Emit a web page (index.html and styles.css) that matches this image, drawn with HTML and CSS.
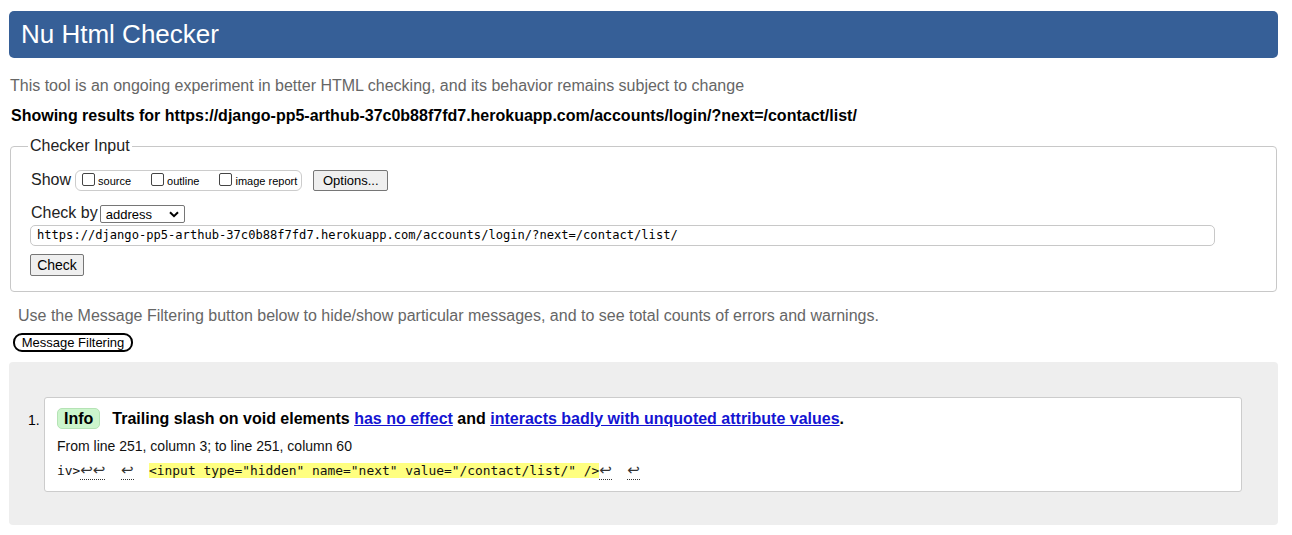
FILE: index.html
```html
<!DOCTYPE html>
<html>
<head>
<meta charset="utf-8">
<title>Nu Html Checker</title>
<link rel="stylesheet" href="styles.css">
</head>
<body>
<div class="page">
  <h1 class="banner">Nu Html Checker</h1>
  <p class="intro">This tool is an ongoing experiment in better HTML checking, and its behavior remains subject to change</p>
  <p class="results">Showing results for https://django-pp5-arthub-37c0b88f7fd7.herokuapp.com/accounts/login/?next=/contact/list/</p>
  <fieldset class="checker">
    <legend>Checker Input</legend>
    <div class="row show-row">
      <span class="lbl">Show</span>
      <span class="opts">
        <label class="opt"><span class="cb"></span>source</label>
        <label class="opt"><span class="cb"></span>outline</label>
        <label class="opt"><span class="cb"></span>image report</label>
      </span>
      <span class="btn options">Options...</span>
    </div>
    <div class="row by-row">
      <span class="lbl">Check by</span>
      <span class="select">address<svg width="10" height="7" viewBox="0 0 10 7"><path d="M1 1.2 L5 5.2 L9 1.2" fill="none" stroke="#000" stroke-width="2"/></svg></span>
    </div>
    <div class="urlbox">https://django-pp5-arthub-37c0b88f7fd7.herokuapp.com/accounts/login/?next=/contact/list/</div>
    <div class="row"><span class="btn check">Check</span></div>
  </fieldset>
  <p class="filter-note">Use the Message Filtering button below to hide/show particular messages, and to see total counts of errors and warnings.</p>
  <div class="filter-row"><span class="filter-btn">Message Filtering</span></div>
  <div class="results-box">
    <div class="msg-row">
      <span class="num">1.</span>
      <div class="card">
        <p class="msg-title"><span class="badge">Info</span><span class="msg-text">Trailing slash on void elements <a href="#">has no effect</a> and <a href="#">interacts badly with unquoted attribute values</a>.</span></p>
        <p class="loc">From line 251, column 3; to line 251, column 60</p>
        <p class="extract">iv&gt;<span class="lf">↩↩</span>  <span class="lf">↩</span>  <mark>&lt;input type="hidden" name="next" value="/contact/list/" /&gt;</mark><span class="lf">↩</span>  <span class="lf">↩</span></p>
      </div>
    </div>
  </div>
</div>
</body>
</html>
```
FILE: styles.css
```css
html, body {
  margin: 0;
  padding: 0;
  background: #fff;
}
body {
  font-family: "Liberation Sans", Arial, sans-serif;
  color: #000;
}
.page {
  width: 1269px;
  margin-left: 9px;
  padding-top: 11px;
}
.banner {
  margin: 0;
  height: 47px;
  box-sizing: border-box;
  background: #365f97;
  color: #fff;
  border-radius: 5px;
  font-weight: normal;
  font-size: 26px;
  line-height: 47px;
  padding-left: 12px;
}
.intro {
  margin: 18px 0 0 1px;
  font-size: 16px;
  line-height: 20px;
  color: #666;
}
.results {
  margin: 10px 0 0 2px;
  font-size: 16px;
  line-height: 20px;
  font-weight: bold;
}
.checker {
  margin: 11px 1px 0 1px;
  border: 1px solid #c8c8c8;
  border-radius: 4px;
  padding: 14px 20px 15px 20px;
  min-width: 0;
}
.checker legend {
  font-size: 16px;
  line-height: 18px;
  padding: 0 2px;
  margin-left: -3px;
  color: #222;
}
.row {
  display: flex;
  align-items: center;
}
.lbl {
  font-size: 16px;
  color: #222;
}
.show-row {
  height: 22px;
}
.opts {
  display: flex;
  align-items: center;
  margin-left: 4px;
  height: 19px;
  border: 1px solid #ccc;
  border-radius: 6px;
  padding: 0 4px 0 6px;
  font-size: 11px;
  line-height: 13px;
}
.opt {
  display: flex;
  align-items: center;
  margin-right: 20px;
  padding-top: 2px;
}
.opt:last-child {
  margin-right: 0;
}
.cb {
  display: inline-block;
  width: 11px;
  height: 11px;
  border: 1px solid #444;
  border-radius: 2px;
  margin: -4px 3px 0 0;
  background: #fff;
}
.btn {
  display: inline-block;
  box-sizing: border-box;
  background: #efefef;
  border: 1px solid #767676;
  border-radius: 2px;
  font-size: 13px;
  color: #000;
  text-align: center;
}
.options {
  margin-left: 11px;
  width: 75px;
  height: 21px;
  line-height: 19px;
}
.by-row {
  margin-top: 11px;
  height: 22px;
}
.select {
  display: inline-flex;
  align-items: center;
  justify-content: space-between;
  box-sizing: border-box;
  width: 85px;
  height: 18px;
  margin-left: 2px;
  margin-top: 2px;
  border: 1px solid #767676;
  border-radius: 2px;
  padding: 0 5px 0 5px;
  font-size: 13px;
}
.urlbox {
  margin-top: 1px;
  margin-left: -1px;
  width: 1185px;
  height: 21px;
  box-sizing: border-box;
  border: 1px solid #c8c8c8;
  border-radius: 5px;
  padding-left: 6px;
  font-family: "DejaVu Sans Mono", "Liberation Mono", monospace;
  font-size: 12.1px;
  line-height: 19px;
}
.check {
  margin-top: 8px;
  margin-left: -1px;
  width: 54px;
  height: 22px;
  line-height: 20px;
  font-size: 14px;
}
.filter-note {
  margin: 15px 0 0 9px;
  font-size: 16px;
  line-height: 18px;
  color: #666;
}
.filter-row {
  margin-top: 8px;
  padding-left: 4px;
  height: 19px;
}
.filter-btn {
  display: inline-block;
  box-sizing: border-box;
  height: 19px;
  width: 120px;
  border: 2px solid #000;
  border-radius: 9px;
  font-size: 13px;
  line-height: 15px;
  text-align: center;
}
.results-box {
  margin-top: 10px;
  background: #eee;
  border-radius: 4px;
  height: 163px;
  box-sizing: border-box;
  padding: 35px 36px 0 19px;
}
.msg-row {
  display: flex;
  align-items: flex-start;
}
.num {
  width: 16px;
  padding-top: 15px;
  font-size: 14px;
  line-height: 16px;
  color: #000;
}
.card {
  flex: 1;
  background: #fff;
  border: 1px solid #ccc;
  border-radius: 3px;
  height: 95px;
  box-sizing: border-box;
  padding: 10px 12px 0 12px;
}
.msg-title {
  margin: 0;
  display: flex;
  align-items: center;
  font-size: 16px;
  font-weight: bold;
  line-height: 20px;
}
.badge {
  display: inline-block;
  box-sizing: border-box;
  height: 21px;
  padding: 0 6px;
  line-height: 19px;
  background: #ccf5cc;
  border: 1px solid #b5e3b5;
  border-radius: 5px;
  margin-right: 12px;
}
.msg-text a {
  color: #1414d2;
  text-decoration: underline;
}
.loc {
  margin: 9px 0 0 0;
  font-size: 14px;
  line-height: 16px;
  color: #111;
}
.extract {
  margin: 8px 0 0 0;
  font-family: "DejaVu Sans Mono", "Liberation Mono", monospace;
  font-size: 12.9px;
  line-height: 17px;
  white-space: pre;
  color: #111;
}
.extract mark {
  background: #ffff80;
  color: #111;
}
.lf {
  font-family: "DejaVu Sans", sans-serif;
  font-size: 15px;
  line-height: 15px;
  border-bottom: 1px dotted #333;
  color: #333;
}
```
